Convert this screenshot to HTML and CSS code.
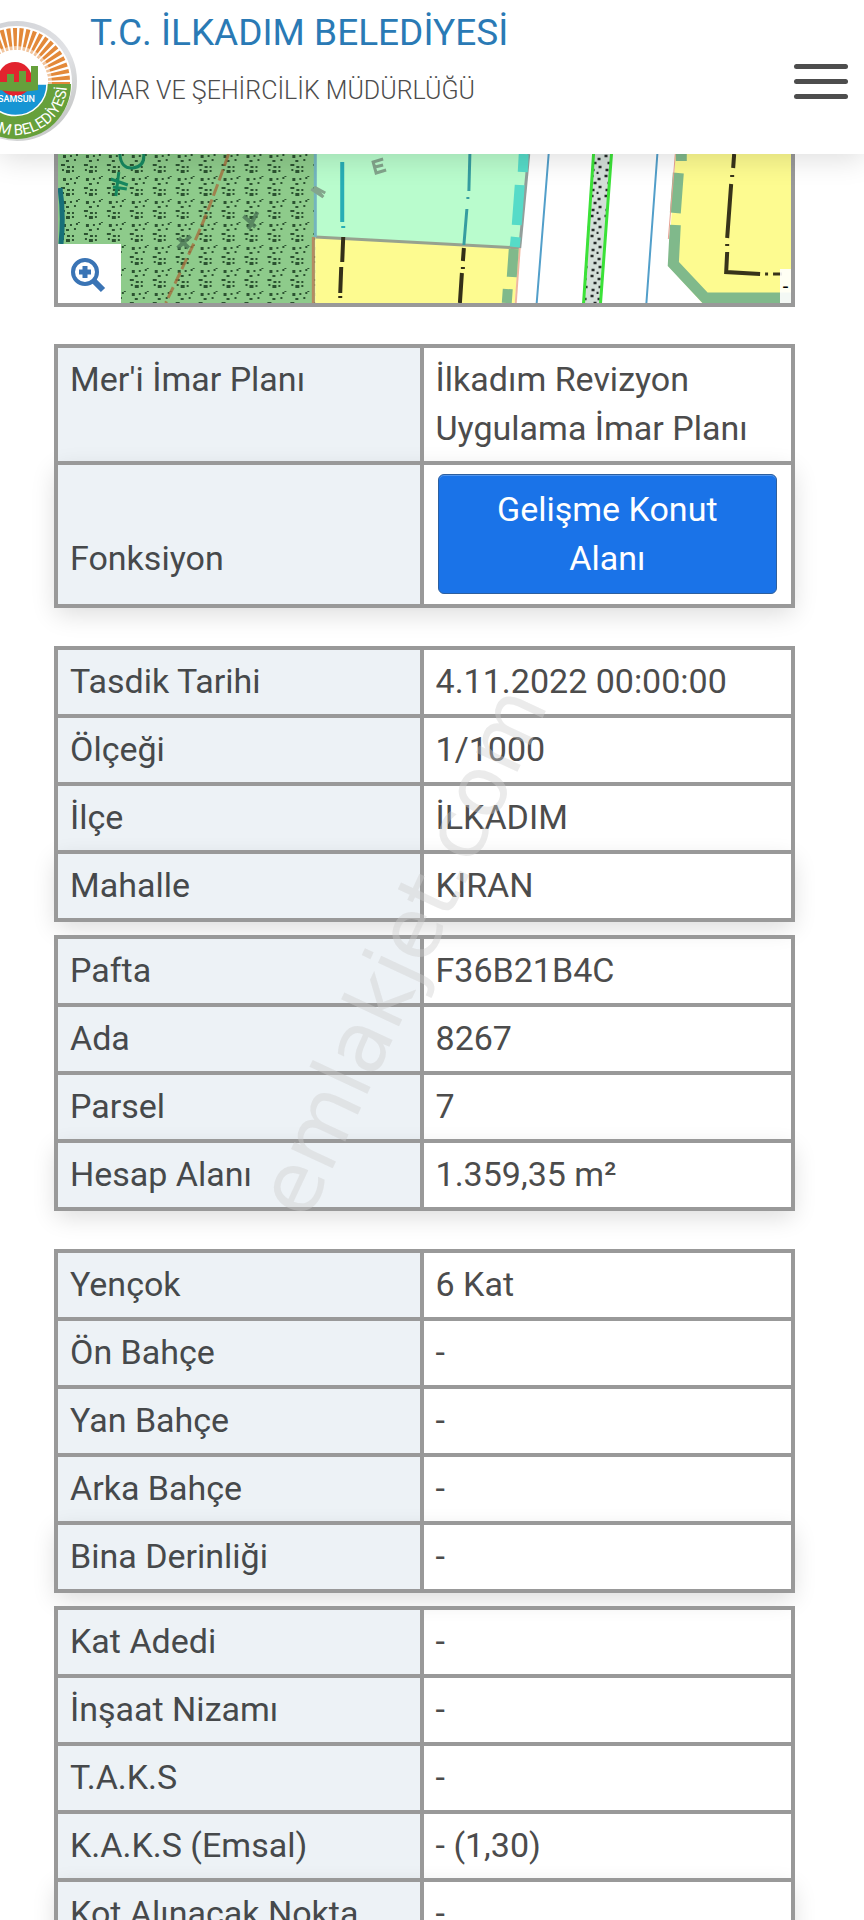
FILE: index.html
```html
<!DOCTYPE html>
<html lang="tr">
<head>
<meta charset="utf-8">
<meta name="viewport" content="width=device-width, initial-scale=1">
<title>T.C. İlkadım Belediyesi - İmar Durumu</title>
<link rel="stylesheet" href="styles.css">
</head>
<body>
<header class="site-header">
  <svg class="logo" viewBox="0 0 78 144" role="img" aria-label="İlkadım Belediyesi Samsun">
    <defs>
      <linearGradient id="rim" x1="0" y1="0" x2="1" y2="1"><stop offset="0" stop-color="#c9cbd0"/><stop offset=".6" stop-color="#e2e3e6"/><stop offset="1" stop-color="#b9bbb9"/></linearGradient>
      <path id="ring" d="M-35 84A51 51 0 0 0 67 84"/>
    </defs>
    <circle cx="17" cy="81" r="60" fill="url(#rim)"/>
    <circle cx="16" cy="82" r="56" fill="#fff"/>
    <circle cx="16" cy="82" r="43" fill="none" stroke="#e3893a" stroke-width="22" stroke-dasharray="3.400 2"/>
    <circle cx="16" cy="82" r="36" fill="#fff" opacity=".5"/>
    <circle cx="16" cy="82" r="32" fill="#fff"/>
    <path d="M-39 84H71A55 55 0 0 1 -39 84Z" fill="#66a03b"/>
    <path d="M-16 84H47A31 31 0 0 1 -16 84Z" fill="#1795d4" stroke="#fff" stroke-width="1.500"/>
    <circle cx="15" cy="79" r="17" fill="#e2232e"/>
    <path d="M-14 88V74H-4v8H7v-8h7v8h5V71h7v11h5V66h7v24q-22 4-52-2z" fill="#66a03b"/>
    <text class="logo-city" x="35" y="102">SAMSUN</text>
    <text class="logo-ring"><textPath href="#ring" startOffset="98%">M BELEDİYESİ</textPath></text>
  </svg>
  <div class="titles">
    <h1 class="title">T.C. İLKADIM BELEDİYESİ</h1>
    <p class="subtitle">İMAR VE ŞEHİRCİLİK MÜDÜRLÜĞÜ</p>
  </div>
  <button class="menu" type="button" aria-label="Menü"><span class="bar"></span><span class="bar"></span><span class="bar"></span></button>
</header>
<main class="content">
  <div class="map">
    <svg class="map-art" viewBox="0 0 735 149" preserveAspectRatio="none" role="img" aria-label="İmar planı haritası">
      <defs>
        <pattern id="trees" width="23" height="23" patternUnits="userSpaceOnUse">
          <g fill="#2b5230"><path d="M3 10h4v2H3zM9 12h3v2H9zM14 12h2v2h-2zM4 15h2v2H4zM8 16h4v3H8zM14 16h2v2h-2zM5 1h3v3H5zM12 1h2v2h-2zM18 0h2v2h-2zM8 6h3v2H8zM16 5h2v2h-2zM20 22h2v1h-2z"/></g>
        </pattern>
        <pattern id="gravel" width="14" height="20" patternUnits="userSpaceOnUse">
          <path d="M2 2h3M9 5h3M5 9h3M10 13h3M3 16h3M8 19h2" stroke="#262b2a" stroke-width="2.500"/>
        </pattern>
      </defs>
      <path d="M0 0h735v149H0z" fill="#fff"/>
      <path d="M0 0h258v149H0z" fill="#8ecb8b"/>
      <path d="M0 0h258v149H0z" fill="url(#trees)"/>
      <path d="M2 34q4 26 1 56" fill="none" stroke="#177078" stroke-width="5"/>
      <g fill="none" stroke="#16875f" stroke-width="3"><path d="M62 0q1 15 13 14T86 0M53 25l17 6M61 18l-3 24M69 35l-14-2"/></g>
      <path d="M171 0Q150 60 135 92T108 149" stroke="#a56f3e" stroke-width="3" stroke-dasharray="12 4" fill="none" opacity=".8"/>
      <g fill="none" stroke="#4c7756" stroke-width="4" opacity=".8"><path d="M121 84l10 10M133 82l-13 12M186 62l12 11M200 58l-9 17"/></g>
      <path d="M258 0H472L463 94 258 83z" fill="#b9fccd"/>
      <path d="M258 83L463 94 458 149H258z" fill="#fdfb90"/>
      <path d="M258 83L463 94" stroke="#97a28f" stroke-width="3"/>
      <path d="M258 0v83" stroke="#73b5bf" stroke-width="3"/>
      <path d="M256 83v66" stroke="#b58b62" stroke-width="3"/>
      <path d="M472 0L463 94" stroke="#929f9b" stroke-width="3"/>
      <path d="M463 94L459 149" stroke="#efb69f" stroke-width="2"/>
      <path d="M467 0l-1 18M463 31l-3 40M459 83l-1 10" stroke="#56dbc8" stroke-width="10"/>
      <path d="M457 95l-2 28M451 135l-1 14" stroke="#80b98b" stroke-width="10"/>
      <path d="M285 8v60M286 72v2" stroke="#27adb5" stroke-width="4"/>
      <path d="M286 83l-1 25M284 113l-1 26M283 142v2" stroke="#332f18" stroke-width="4"/>
      <path d="M413 0l-1 37M411 43v2M410 55l-3 36" stroke="#369da0" stroke-width="3"/>
      <path d="M407 94l-1 13M406 113v2M405 119l-2 30" stroke="#332f18" stroke-width="4"/>
      <g fill="none" stroke="#83a58c" stroke-width="3"><path d="M329 16l-10 3-3-11 10-3M318 13l8-2M254 35l12 8-9-10 11 6"/></g>
      <path d="M492 0L480 149M601 0L590 149" stroke="#529fca" stroke-width="2" fill="none"/>
      <path d="M536 0h18l-10 149h-18z" fill="#d3ded8"/>
      <path d="M536 0h18l-10 149h-18z" fill="url(#gravel)"/>
      <path d="M537 0L527 149M555 0L544 149" stroke="#3be238" stroke-width="3" fill="none"/>
      <path d="M619 0H735V149H646L612 112z" fill="#fdfb90"/>
      <path d="M625 0v7M622 19l-3 40M619 71l-2 39 32 34h88" fill="none" stroke="#80b98b" stroke-width="11"/>
      <path d="M619 0L612 85" stroke="#e7a294" stroke-width="1"/>
      <path d="M678 0l-1 14M676 21v2M675 30l-4 54M671 90v2M671 98l-1 20 34 2" fill="none" stroke="#37331a" stroke-width="4"/>
      <path d="M709 120h3M717 120h9" stroke="#37331a" stroke-width="3"/>
    </svg>
    <button class="zoom" type="button" aria-label="Haritayı büyüt">
      <svg class="zoom-icon" viewBox="0 0 36 36" aria-hidden="true"><circle cx="15" cy="15" r="12" fill="none" stroke="#3a74b5" stroke-width="4"/><path d="M23 23l10 10" stroke="#3a74b5" stroke-width="6"/><path d="M15 9v12M9 15h12" stroke="#3a74b5" stroke-width="5"/></svg>
    </button>
    <span class="map-note">-</span>
  </div>

  <table class="info">
    <tr><th scope="row">Mer'i İmar Planı</th><td>İlkadım Revizyon Uygulama İmar Planı</td></tr>
    <tr><th scope="row">Fonksiyon</th><td><button class="function" type="button">Gelişme Konut Alanı</button></td></tr>
  </table>

  <div class="group">
    <table class="info">
      <tr><th scope="row">Tasdik Tarihi</th><td>4.11.2022 00:00:00</td></tr>
      <tr><th scope="row">Ölçeği</th><td>1/1000</td></tr>
      <tr><th scope="row">İlçe</th><td>İLKADIM</td></tr>
      <tr><th scope="row">Mahalle</th><td>KIRAN</td></tr>
    </table>
    <table class="info">
      <tr><th scope="row">Pafta</th><td>F36B21B4C</td></tr>
      <tr><th scope="row">Ada</th><td>8267</td></tr>
      <tr><th scope="row">Parsel</th><td>7</td></tr>
      <tr><th scope="row">Hesap Alanı</th><td>1.359,35 m²</td></tr>
    </table>
    <span class="watermark" aria-hidden="true">emlakjet.com</span>
  </div>

  <div class="group">
    <table class="info">
      <tr><th scope="row">Yençok</th><td>6 Kat</td></tr>
      <tr><th scope="row">Ön Bahçe</th><td>-</td></tr>
      <tr><th scope="row">Yan Bahçe</th><td>-</td></tr>
      <tr><th scope="row">Arka Bahçe</th><td>-</td></tr>
      <tr><th scope="row">Bina Derinliği</th><td>-</td></tr>
    </table>
    <table class="info">
      <tr><th scope="row">Kat Adedi</th><td>-</td></tr>
      <tr><th scope="row">İnşaat Nizamı</th><td>-</td></tr>
      <tr><th scope="row">T.A.K.S</th><td>-</td></tr>
      <tr><th scope="row">K.A.K.S (Emsal)</th><td>- (1,30)</td></tr>
      <tr><th scope="row">Kot Alınacak Nokta</th><td>-</td></tr>
    </table>
  </div>
</main>
</body>
</html>
```

FILE: styles.css
```css
* { box-sizing: border-box; }

html { scrollbar-width: none; }

body {
  margin: 0;
  background: #fff;
  color: #4c4c4c;
  font-family: Roboto, "Noto Sans", sans-serif;
  font-size: 34px;
  line-height: 49px;
}

button { font: inherit; border: 0; cursor: pointer; }

.site-header {
  position: relative;
  z-index: 2;
  display: flex;
  align-items: flex-start;
  gap: 12px;
  min-height: 154px;
  padding-right: 16px;
  background: #fff;
  box-shadow: 0 4px 28px rgba(0, 0, 0, 0.14);
}

.logo { flex: none; width: 78px; height: 144px; }
.logo-city { fill: #fff; font: 500 9px Roboto, sans-serif; text-anchor: end; }
.logo-ring { fill: #fff; font: 400 15px Roboto, sans-serif; text-anchor: end; }

.titles { flex: 1; padding-top: 9px; }
.title { margin: 0; color: #2a7ab5; font-size: 37px; font-weight: 400; line-height: 48px; }
.subtitle { margin: 12px 0 0; font-size: 25px; font-weight: 300; line-height: 44px; }

.menu {
  display: flex;
  flex-direction: column;
  gap: 10px;
  margin-top: 64px;
  padding: 0;
  background: none;
}
.bar { width: 54px; height: 5px; border-radius: 3px; background: #4d4d4d; }

.content { padding: 0 69px 0 54px; }

.map { position: relative; margin-bottom: 37px; border: 4px solid #999; border-top: 0; }
.map-art { display: block; width: 100%; height: 149px; }
.zoom {
  position: absolute;
  left: 0;
  bottom: 0;
  display: grid;
  place-items: center;
  width: 63px;
  height: 59px;
  padding: 3px 4px 0 0;
  background: #fff;
}
.zoom-icon { width: 36px; height: 36px; }
.map-note {
  position: absolute;
  right: 0;
  bottom: 0;
  width: 11px;
  background: rgba(255, 255, 255, 0.9);
  color: #000;
  font-size: 20px;
  line-height: 34px;
  text-align: center;
}

.info { width: 100%; table-layout: fixed; border-collapse: collapse; }
.info th, .info td {
  padding: 7px 12px 8px;
  border: 4px solid #999;
  font-weight: 400;
  text-align: left;
  vertical-align: baseline;
}
.info th { width: 49.6%; background: #edf2f6; color: #46494b; }
.info tr:last-child { box-shadow: 0 8px 24px rgba(0, 0, 0, 0.14); }

.group { position: relative; display: grid; gap: 13px; margin-top: 38px; }

.function {
  display: inline-block;
  width: calc(100% - 4px);
  margin: 2px;
  padding: 10px 32px;
  border: 1px solid #2d5f9e;
  border-radius: 6px;
  background: #1a73e8;
  box-shadow: inset 0 1px 0 rgba(255, 255, 255, 0.25);
  color: #fff;
  vertical-align: baseline;
}

.watermark {
  position: absolute;
  top: 54%;
  left: 47%;
  color: rgba(205, 205, 205, 0.4);
  font-family: "DejaVu Sans", sans-serif;
  font-size: 84px;
  line-height: 84px;
  transform: translate(-50%, -50%) rotate(-65deg);
  pointer-events: none;
}
```
